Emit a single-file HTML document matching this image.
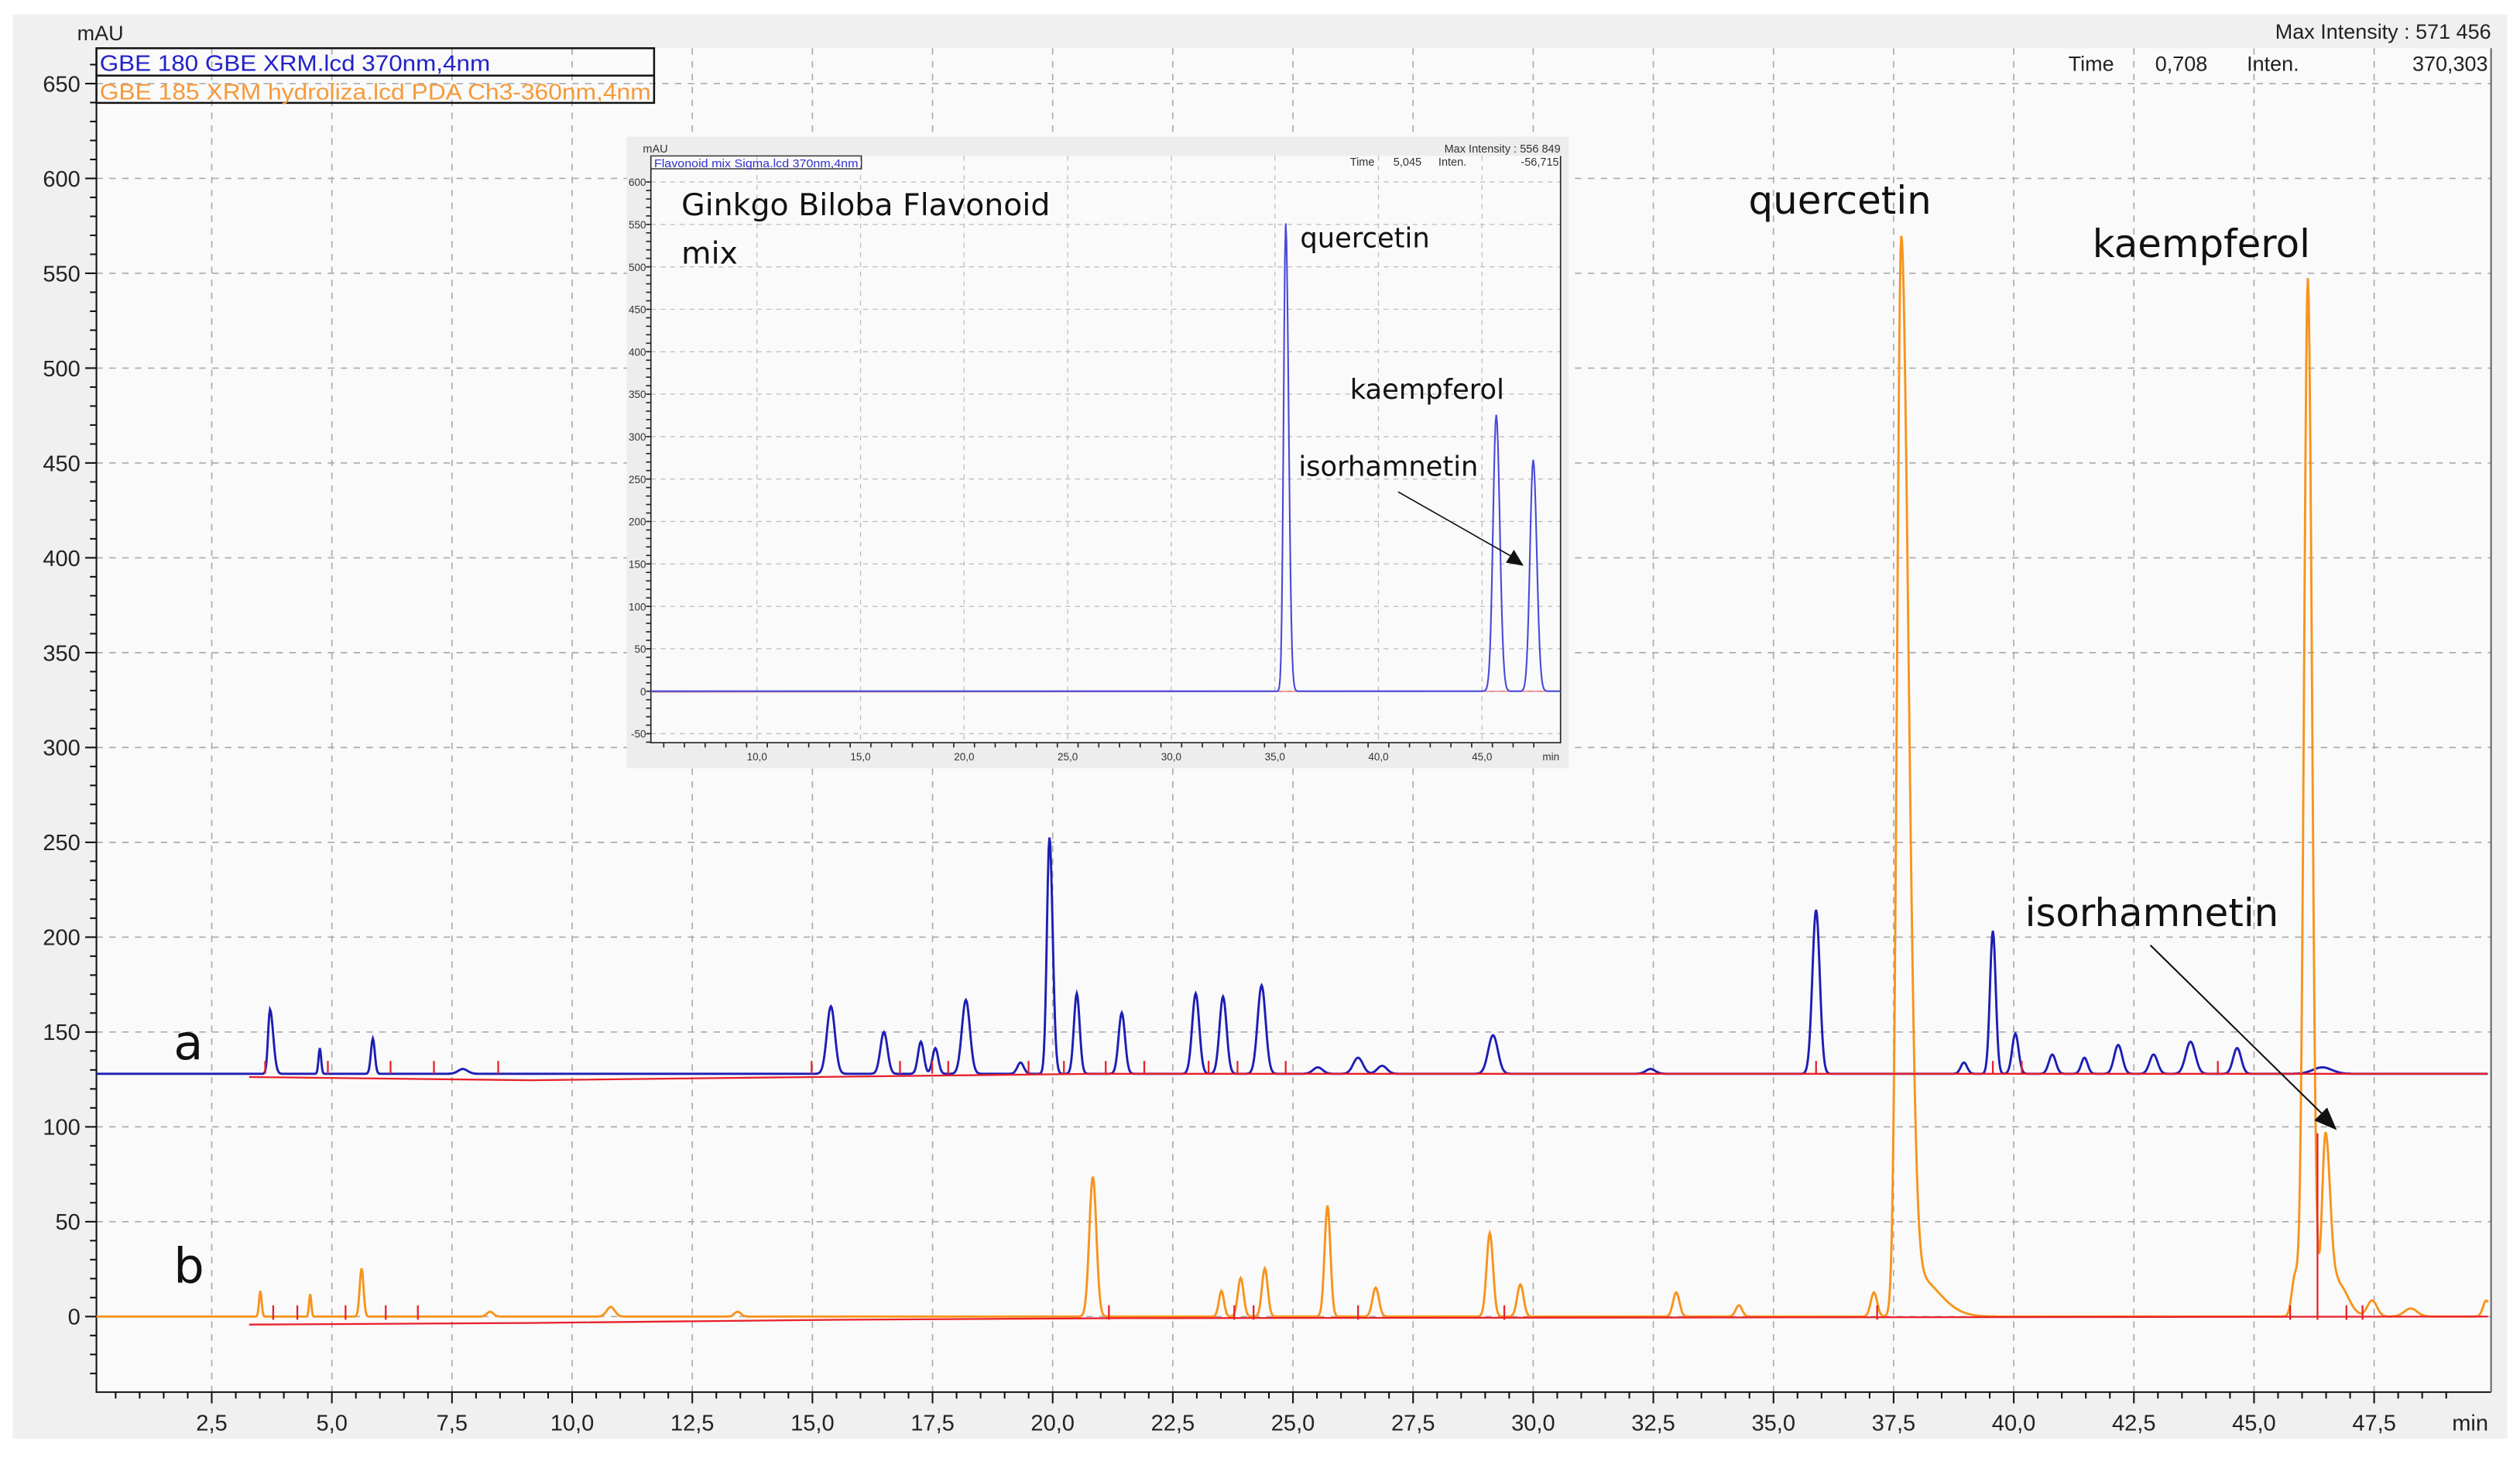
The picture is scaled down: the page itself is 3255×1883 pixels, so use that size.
<!DOCTYPE html>
<html><head><meta charset="utf-8">
<style>
html,body{margin:0;padding:0;background:#fff;}
svg{display:block}
text{font-family:"Liberation Sans",sans-serif}
.cal{font-family:"DejaVu Sans","Liberation Sans",sans-serif}
</style></head>
<body>
<svg id="s" width="3255" height="1883" viewBox="0 0 1568 907" preserveAspectRatio="none" xmlns="http://www.w3.org/2000/svg">
<rect x="0" y="0" width="1568" height="907" fill="#fff"/>
<rect x="8" y="9" width="1552" height="886" fill="#f0f0f0"/>
<rect x="60" y="30" width="1490" height="836" fill="#fafafa"/>
<g id="grid" stroke="#aaa" stroke-width="0.8" stroke-dasharray="4,4" fill="none"></g>
<g id="axes" stroke="#111" stroke-width="1" fill="none"></g>
<g id="labels" font-size="14" fill="#222"></g>
<g id="traces" fill="none"></g>
<text x="48" y="25" font-size="13" fill="#222">mAU</text>
<text x="1550" y="24" font-size="13" fill="#222" text-anchor="end">Max Intensity : 571 456</text>
<text x="1287" y="44" font-size="13" fill="#222">Time</text>
<text x="1341" y="44" font-size="13" fill="#222">0,708</text>
<text x="1398" y="44" font-size="13" fill="#222">Inten.</text>
<text x="1548" y="44" font-size="13" fill="#222" text-anchor="end">370,303</text>
<rect x="60" y="30" width="347" height="34" fill="none" stroke="#111" stroke-width="1.2"/>
<line x1="60" y1="47" x2="407" y2="47" stroke="#111" stroke-width="1.2"/>
<text x="62" y="44" font-size="14" fill="#2222c8" textLength="243" lengthAdjust="spacingAndGlyphs">GBE 180 GBE XRM.lcd 370nm,4nm</text>
<text x="62" y="62" font-size="14" fill="#f59a3a" textLength="343" lengthAdjust="spacingAndGlyphs">GBE 185 XRM hydroliza.lcd PDA Ch3-360nm,4nm</text>
<text class="cal" x="108" y="659" font-size="30" fill="#111">a</text>
<text class="cal" x="108" y="798" font-size="30" fill="#111">b</text>
<text class="cal" x="1088" y="133" font-size="24" fill="#111">quercetin</text>
<text class="cal" x="1302" y="160" font-size="24" fill="#111">kaempferol</text>
<text class="cal" x="1260" y="576" font-size="24" fill="#111">isorhamnetin</text>
<line x1="1338" y1="588" x2="1446" y2="694" stroke="#111" stroke-width="1"/>
<polygon points="1454,703 1440,697 1448,689" fill="#111"/>
<!-- inset -->
<g id="inset">
<rect x="390" y="85" width="586" height="393" fill="#ededed"/>
<rect x="405" y="97" width="566" height="365" fill="#fafafa"/>
<g id="igrid" stroke="#bbb" stroke-width="0.6" stroke-dasharray="3,3" fill="none"></g>
<g id="iaxes" stroke="#222" stroke-width="0.8" fill="none"></g>
<g id="ilabels" font-size="6.5" fill="#333"></g>
<g id="itraces" fill="none"></g>
<text x="400" y="95" font-size="7" fill="#333">mAU</text>
<text x="971" y="95" font-size="7" fill="#333" text-anchor="end">Max Intensity : 556 849</text>
<text x="840" y="103" font-size="7" fill="#333">Time</text>
<text x="867" y="103" font-size="7" fill="#333">5,045</text>
<text x="895" y="103" font-size="7" fill="#333">Inten.</text>
<text x="970" y="103" font-size="7" fill="#333" text-anchor="end">-56,715</text>
<rect x="405" y="97" width="131" height="8" fill="none" stroke="#333" stroke-width="0.7"/>
<text x="407" y="104" font-size="7" fill="#3333cc" textLength="127" lengthAdjust="spacingAndGlyphs">Flavonoid mix Sigma.lcd 370nm,4nm</text>
<text class="cal" x="424" y="134" font-size="19" fill="#111">Ginkgo Biloba Flavonoid</text>
<text class="cal" x="424" y="164" font-size="19" fill="#111">mix</text>
<text class="cal" x="809" y="154" font-size="17" fill="#111">quercetin</text>
<text class="cal" x="840" y="248" font-size="17" fill="#111">kaempferol</text>
<text class="cal" x="808" y="296" font-size="17" fill="#111">isorhamnetin</text>
<line x1="870" y1="306" x2="942" y2="347" stroke="#111" stroke-width="0.8"/>
<polygon points="948,352 937,350 942,342" fill="#111"/>
</g>
</svg>
<script>
var NS="http://www.w3.org/2000/svg";
function el(p,t,a,txt){var e=document.createElementNS(NS,t);for(var k in a)e.setAttribute(k,a[k]);if(txt!==undefined)e.textContent=txt;document.getElementById(p).appendChild(e);return e;}
var X=function(t){return 57+t*29.9;}, Y=function(v){return 819-v*1.18;};
var L=60,R=1550,T=30,B=866;
for(var t=2.5;t<=47.6;t+=2.5){var x=X(t);el('grid','line',{x1:x,y1:T,x2:x,y2:B});el('labels','text',{x:x,y:890,'text-anchor':'middle'},t.toFixed(1).replace('.',','));}
el('labels','text',{x:1537,y:890,'text-anchor':'middle'},'min');
for(var v=-50;v<=650;v+=50){var y=Y(v);if(v!==-50)el('grid','line',{x1:L,y1:y,x2:R,y2:y});if(v>=0)el('labels','text',{x:50,y:y+5,'text-anchor':'end'},v);}
el('axes','polyline',{points:L+','+T+' '+L+','+B+' '+R+','+B});
el('axes','line',{x1:R,y1:T,x2:R,y2:B,stroke:'#666'});
for(var t=0.5;t<49.5;t+=0.5){var x=X(t);var big=Math.abs(t/2.5-Math.round(t/2.5))<0.01;el('axes','line',{x1:x,y1:B,x2:x,y2:B+(big?7:4)});}
for(var v=-40;v<=660;v+=10){var y=Y(v);if(y<T||y>B)continue;var big=v%50===0;el('axes','line',{x1:L,y1:y,x2:L-(big?7:4),y2:y});}
function trace(base,peaks,x0,x1,col,w,g){var d='';for(var x=x0;x<=x1;x+=0.5){var y=base;for(var i=0;i<peaks.length;i++){var p=peaks[i];var dx=x-p[0];var s=dx<0?p[2]:(p[3]||p[2]);y-=p[1]*Math.exp(-dx*dx/(2*s*s));}d+=(d?'L':'M')+x.toFixed(1)+','+y.toFixed(1);}el(g||'traces','path',{d:d,stroke:col,'stroke-width':w||1.3});}
var bp=[[168,40,1.2,2],[199,16,0.8],[232,22,1.2],[288,3,3],[517,42,2.5],[550,26,2.2],[573,20,1.8],[582,16,1.8],[601,46,2.5],[635,7,2],[653,147,1.6,2],[670,50,1.8],[698,38,2],[744,50,2.2],[761,48,2.2],[785,55,2.5],[820,4,3],[845,10,3],[860,5,3],[929,24,3],[1027,3,3],[1130,102,2.3],[1222,7,2],[1240,89,1.8],[1254,25,2],[1277,12,2.2],[1297,10,2],[1318,18,2.5],[1340,12,2.5],[1363,20,3],[1392,16,2.5],[1445,4,6]];
trace(668,bp,60,1548,'#1e1eb4',1.4);
var op=[[162,16,0.8],[193,14,0.7],[225,30,1.2],[305,3,2],[380,6,2.5],[459,3,2],[680,87,2.2],[760,16,1.6],[772,24,1.8],[787,30,1.8],[826,69,1.8],[856,18,2],[927,52,2],[946,20,2],[1043,15,2],[1082,7,2],[1166,15,2],[1183,672,2.6,4.5],[1192,25,3,14],[1428,25,2],[1436,646,2.4,2.6],[1447,114,2.2,3],[1455,20,3,6],[1476,10,3],[1500,5,4],[1547,10,2]];
trace(819,op,60,1548,'#f7941d',1.4);
function rl(a){el('traces','path',{d:a,stroke:'#e8202a','stroke-width':1.1});}
rl('M155,670L330,672L680,668L1548,668');
rl('M155,824L330,823L520,821L700,820L1548,819');
var dropsA=[165,204,243,270,310,505,560,580,590,640,662,688,712,752,770,800,1130,1240,1258,1380];
dropsA.forEach(function(x){rl('M'+x+',668L'+x+',660');});
var dropsB=[170,185,215,240,260,690,768,780,845,936,1168,1425,1442,1460,1470];
dropsB.forEach(function(x){rl('M'+x+',821L'+x+','+(x==1442?705:812));});
var IX=function(t){return 471+(t-10)*12.89;}, IY=function(v){return 430-v*0.528;};
var iL=405,iR=971,iT=97,iB=462;
for(var t=10;t<=45;t+=5){var x=IX(t);el('igrid','line',{x1:x,y1:iT,x2:x,y2:iB});el('ilabels','text',{x:x,y:473,'text-anchor':'middle'},t.toFixed(1).replace('.',','));}
el('ilabels','text',{x:965,y:473,'text-anchor':'middle'},'min');
for(var v=-50;v<=600;v+=50){var y=IY(v);el('igrid','line',{x1:iL,y1:y,x2:iR,y2:y});el('ilabels','text',{x:402,y:y+2.5,'text-anchor':'end'},v);}
el('iaxes','polyline',{points:iL+','+iT+' '+iL+','+iB+' '+iR+','+iB+' '+iR+','+iT});
for(var t=5.5;t<=48;t+=1){var x=IX(t);el('iaxes','line',{x1:x,y1:iB,x2:x,y2:iB+3});}
for(var v=-60;v<=600;v+=10){var y=IY(v);if(y<iT||y>iB)continue;el('iaxes','line',{x1:iL,y1:y,x2:iL-3,y2:y});}
el('itraces','path',{d:'M405,430.5L971,430',stroke:'#e44','stroke-width':0.8,opacity:0.6});
trace(430,[[800,291,1.3,1.8],[931,172,2,2.2],[954,144,2,2.2]],iL,iR,'#4848d8',1,'itraces');
</script>
</body></html>
